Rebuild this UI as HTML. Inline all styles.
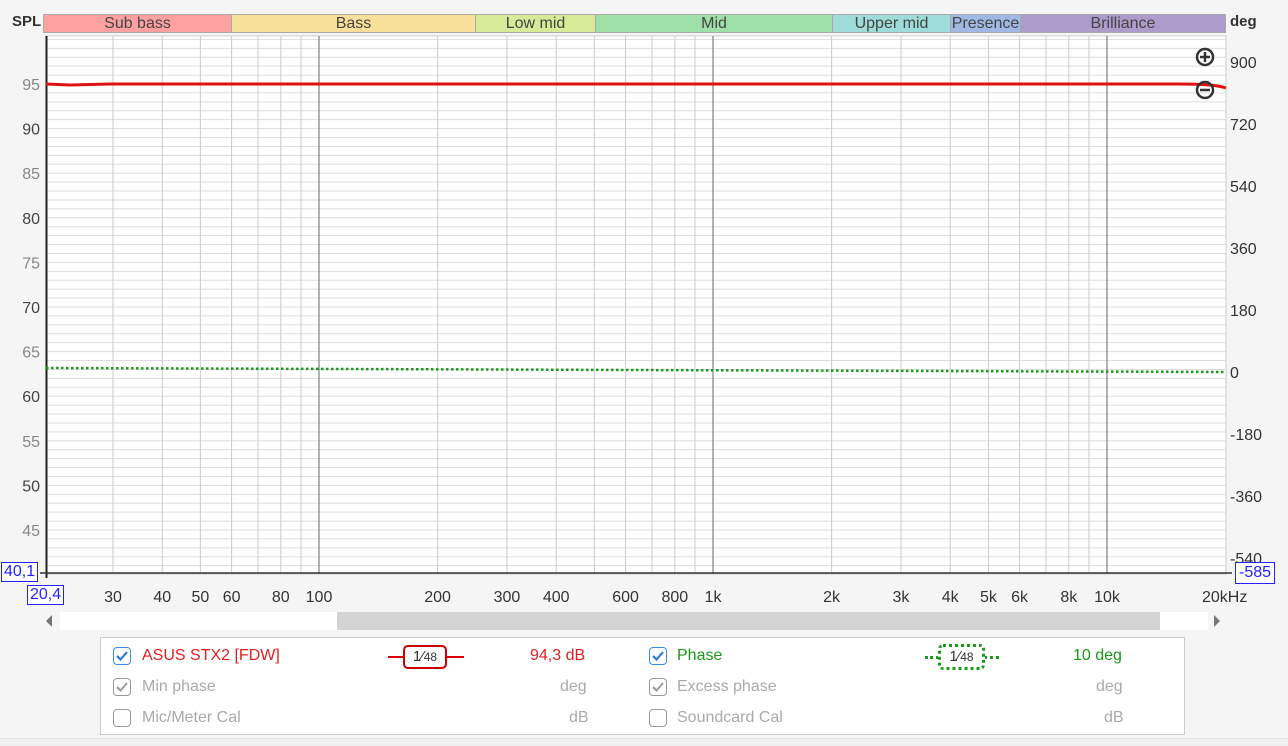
<!DOCTYPE html><html><head><meta charset="utf-8"><style>
body{margin:0;width:1288px;height:745px;background:#f5f5f5;font-family:"Liberation Sans",sans-serif;position:relative;overflow:hidden}
.a{position:absolute}
.t{position:absolute;font-size:15px;color:#333}
.band{position:absolute;top:14px;height:19px;border:1px solid #aaa;box-sizing:border-box;font-size:16px;color:#444;text-align:center;line-height:17px;overflow:hidden;white-space:nowrap}
.lg{position:absolute;font-size:16px}
.cb{position:absolute;width:18px;height:18px;border:1px solid #999;border-radius:4px;box-sizing:border-box;background:#fff}
</style></head><body>
<div class="t" style="left:12px;top:13px;font-weight:bold;color:#333">SPL</div>
<div class="t" style="left:1230px;top:13px;font-weight:bold">deg</div>
<div class="band" style="left:43px;width:189px;background:#fda0a0">Sub bass</div>
<div class="band" style="left:231px;width:245px;background:#f8df9a">Bass</div>
<div class="band" style="left:475px;width:121px;background:#d6ea98">Low mid</div>
<div class="band" style="left:595px;width:238px;background:#9fe0a8">Mid</div>
<div class="band" style="left:832px;width:119px;background:#9ddcd8">Upper mid</div>
<div class="band" style="left:950px;width:71px;background:#9fb9e4">Presence</div>
<div class="band" style="left:1020px;width:206px;background:#ad9bcb">Brilliance</div>
<svg class="a" style="left:0;top:0" width="1288" height="745" id="s"></svg>
<div class="a" style="left:1px;top:562px;border:1px solid #22f;background:#fff;color:#22f;font-size:16px;padding:0 2px;line-height:18px">40,1</div>
<div class="a" style="left:27px;top:585px;border:1px solid #22f;background:#fff;color:#22f;font-size:16px;padding:0 2px;line-height:18px">20,4</div>
<div class="a" style="left:1235px;top:562px;border:1px solid #22f;background:#fff;color:#22f;font-size:16px;padding:0 3px;line-height:20px">-585</div>
<div class="a" style="left:60px;top:612px;width:1148px;height:18px;background:#fff"></div>
<div class="a" style="left:337px;top:612px;width:823px;height:18px;background:#d4d4d4"></div>
<div class="a" style="left:46px;top:615px;width:0;height:0;border:6px solid transparent;border-right:6px solid #777;border-left:0"></div>
<div class="a" style="left:1214px;top:615px;width:0;height:0;border:6px solid transparent;border-left:6px solid #777;border-right:0"></div>
<div class="a" style="left:100px;top:637px;width:1085px;height:98px;background:#fff;border:1px solid #ccc;box-sizing:border-box"></div>
<div class="cb" style="left:113px;top:647px;border-color:#3a8ee6"></div><svg class="a" style="left:113px;top:647px" width="18" height="18"><path d="M4 9l3.5 3.5L14 5" stroke="#1a73e8" stroke-width="2" fill="none"/></svg>
<div class="lg" style="left:142px;top:647px;color:#e02020">ASUS STX2 [FDW]</div>
<div class="cb" style="left:113px;top:678px"></div><svg class="a" style="left:113px;top:678px" width="18" height="18"><path d="M4 9l3.5 3.5L14 5" stroke="#999" stroke-width="2" fill="none"/></svg>
<div class="lg" style="left:142px;top:678px;color:#aaa">Min phase</div>
<div class="cb" style="left:113px;top:709px"></div>
<div class="lg" style="left:142px;top:709px;color:#aaa">Mic/Meter Cal</div>
<div class="a" style="left:388px;top:656px;width:76px;height:2px;background:#d00"></div>
<div class="a" style="left:403px;top:645px;width:44px;height:24px;border:2px solid #c00;border-radius:5px;background:#fff;box-sizing:border-box;font-size:15px;text-align:center;line-height:20px;color:#333">1⁄<span style="font-size:12px">48</span></div>
<div class="lg" style="left:530px;top:647px;color:#e02020">94,3 dB</div>
<div class="lg" style="left:560px;top:678px;color:#aaa">deg</div>
<div class="lg" style="left:569px;top:709px;color:#aaa">dB</div>
<div class="cb" style="left:649px;top:647px;border-color:#3a8ee6"></div><svg class="a" style="left:649px;top:647px" width="18" height="18"><path d="M4 9l3.5 3.5L14 5" stroke="#1a73e8" stroke-width="2" fill="none"/></svg>
<div class="lg" style="left:677px;top:647px;color:#1a9a1a">Phase</div>
<div class="cb" style="left:649px;top:678px"></div><svg class="a" style="left:649px;top:678px" width="18" height="18"><path d="M4 9l3.5 3.5L14 5" stroke="#999" stroke-width="2" fill="none"/></svg>
<div class="lg" style="left:677px;top:678px;color:#aaa">Excess phase</div>
<div class="cb" style="left:649px;top:709px"></div>
<div class="lg" style="left:677px;top:709px;color:#aaa">Soundcard Cal</div>
<div class="a" style="left:925px;top:656px;width:74px;border-top:3px dotted #1a9a1a"></div>
<div class="a" style="left:938px;top:644px;width:47px;height:26px;border:3px dotted #1a9a1a;border-radius:5px;background:#fff;box-sizing:border-box;font-size:15px;text-align:center;line-height:19px;color:#333">1⁄<span style="font-size:12px">48</span></div>
<div class="lg" style="left:1073px;top:647px;color:#1a9a1a">10 deg</div>
<div class="lg" style="left:1096px;top:678px;color:#aaa">deg</div>
<div class="lg" style="left:1104px;top:709px;color:#aaa">dB</div>
<div class="a" style="left:0;top:738px;width:1288px;height:7px;border-top:1px solid #ddd;background:#f0f0f0"></div>
<script>
const s=document.getElementById('s');let h='';
const X=f=>319+394*Math.log10(f/100);const Y=d=>84+(95-d)*8.92;
h+='<rect x="46" y="36" width="1180" height="538" fill="#fff" stroke="#ccc"/>';
for(let d=41;d<=100;d++){h+=`<line x1="46" x2="1226" y1="${Y(d)}" y2="${Y(d)}" stroke="#ddd"/>`}
let fs=[];for(let dec of [10,100,1000,10000])for(let m=1;m<10;m++){let f=m*dec;if(f>20.4&&f<20000)fs.push(f)}
fs.forEach(f=>{let x=X(f);let maj=(f==100||f==1000||f==10000);h+=`<line x1="${x}" x2="${x}" y1="36" y2="574" stroke="${maj?'#666':'#ccc'}"/>`});
h+='<line x1="46.5" x2="46.5" y1="36" y2="578" stroke="#222" stroke-width="2"/><line x1="40" x2="1232" y1="573" y2="573" stroke="#333" stroke-width="1.5"/>';
for(let d=45;d<=95;d+=5)h+=`<text x="40" y="${Y(d)+6}" text-anchor="end" font-size="16" fill="${d%10?'#888':'#444'}" font-family="Liberation Sans">${d}</text>`;
[900,720,540,360,180,0,-180,-360,-540].forEach((p,i)=>{let y=372-p*(62/180);h+=`<text x="1230" y="${y+6}" font-size="16" fill="#333" font-family="Liberation Sans">${p}</text>`});
[[30,'30'],[40,'40'],[50,'50'],[60,'60'],[80,'80'],[100,'100'],[200,'200'],[300,'300'],[400,'400'],[600,'600'],[800,'800'],[1000,'1k'],[2000,'2k'],[3000,'3k'],[4000,'4k'],[5000,'5k'],[6000,'6k'],[8000,'8k'],[10000,'10k']].forEach(a=>h+=`<text x="${X(a[0])}" y="602" text-anchor="middle" font-size="16" fill="#333" font-family="Liberation Sans">${a[1]}</text>`);
h+='<text x="1202" y="602" font-size="16" fill="#333" font-family="Liberation Sans">20kHz</text>';
h+='<path d="M46 84 L70 85 L110 84 L1180 84 Q1215 84 1226 88" stroke="#e01010" stroke-width="3" fill="none"/>';
h+='<line x1="46" y1="368" x2="1226" y2="372" stroke="#1a9a1a" stroke-width="2.5" stroke-dasharray="2.5 2.5"/>';
h+='<circle cx="1205" cy="57" r="8" fill="none" stroke="#333" stroke-width="2.5"/><path d="M1200 57h10M1205 52v10" stroke="#333" stroke-width="2.5"/>';
h+='<circle cx="1205" cy="90" r="8" fill="none" stroke="#333" stroke-width="2.5"/><path d="M1200 90h10" stroke="#333" stroke-width="2.5"/>';
s.innerHTML=h;
</script>
</body></html>
